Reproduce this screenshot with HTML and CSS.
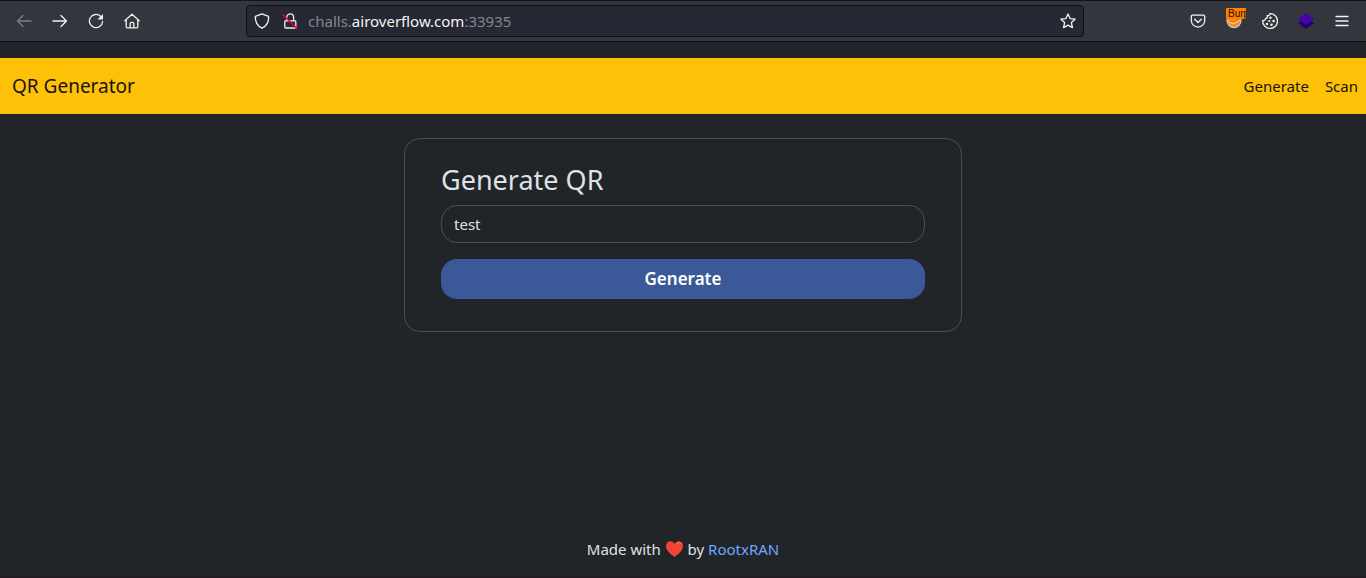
FILE: index.html
```html
<!DOCTYPE html>
<html lang="en">
<head>
<meta charset="utf-8">
<title>QR Generator</title>
<link rel="stylesheet" href="styles.css">
</head>
<body>
<header class="toolbar">
  <div class="tools tools-left">
    <button class="tool disabled" aria-label="Back" disabled><svg viewBox="0 0 16 16"><path d="M15 8H1.5M7 2.500 1.500 8 7 13.500"/></svg></button>
    <button class="tool" aria-label="Forward"><svg viewBox="0 0 16 16"><path d="M1 8h13.500M9 2.500 14.500 8 9 13.500"/></svg></button>
    <button class="tool" aria-label="Reload"><svg viewBox="0 0 16 16"><path d="M12.800 3.500A6.600 6.600 0 1 0 14.600 8.500"/><path class="solid" d="M15 1v5.500H9.500z"/></svg></button>
    <button class="tool" aria-label="Home"><svg viewBox="0 0 16 16"><path d="M.8 7.800 8 1.200l7.200 6.600M2.200 6.800v7q0 1 1 1h9.600q1 0 1-1v-7M6.200 14.500v-4q0-1.200 1.200-1.200h1.200q1.200 0 1.200 1.200v4"/></svg></button>
  </div>
  <div class="address">
    <svg class="icon" viewBox="0 0 16 16"><path d="M8 .9 14.600 3.300c.4 5.200-1.600 9.500-6.600 11.900C3 12.800 1 8.500 1.400 3.300z"/></svg>
    <svg class="icon" viewBox="0 0 16 16"><path d="M4.800 7V4.300a3.400 3.400 0 0 1 6.800 0V7M3.500 7.800h9.600q.7 0 .7.700v5.600q0 .9-.9.900H3.700q-.9 0-.9-.9V8.500q0-.7.7-.7z"/><path class="slash" d="M1.200 2 14.800 15.400"/></svg>
    <span class="url">challs.<b>airoverflow.com</b>:33935</span>
    <button class="star" aria-label="Bookmark this page"><svg viewBox="0 0 16 16"><path d="m8 1 2.100 4.600 5 .6-3.700 3.400 1 5L8 12.100l-4.400 2.500 1-5L.9 6.200l5-.6z"/></svg></button>
  </div>
  <div class="tools tools-right">
    <button class="tool" aria-label="Pocket"><svg viewBox="0 0 16 16"><path d="M2.500 2.200h11q1.200 0 1.200 1.200v4a6.700 6.700 0 0 1-13.400 0v-4q0-1.200 1.200-1.200zM4.700 6.300 8 9.500l3.300-3.200"/></svg></button>
    <button class="tool proxy" aria-label="Proxy: Burp"><svg viewBox="0 0 16 16"><circle cx="8" cy="7.500" r="7" fill="#ff8a14" stroke="#c9c5c0"/><path d="M3 8q3 5 10-.5" stroke="#f5d5b5"/><path d="m4 8 3 1 5-2" stroke="#e36a00"/></svg><span class="badge">Burp</span></button>
    <button class="tool" aria-label="Cookies"><svg viewBox="0 0 16 16"><path d="M8 .6A7.400 7.400 0 1 1 .7 7.300c1.600.7 2.800-.3 2.700-1.700C5.100 5.600 6 4 5 2.700 6 2.900 8 2.300 8 .6z"/><g class="solid"><circle cx="8.500" cy="4.700" r="1.200"/><circle cx="11.600" cy="8" r="1.300"/><circle cx="7.200" cy="8" r="1.100"/><circle cx="5" cy="11" r="1.200"/><circle cx="9.500" cy="11.700" r="1.300"/></g></svg></button>
    <button class="tool" aria-label="Layers"><svg viewBox="0 0 16 16"><path d="m0 10 8-5 8 5-8 6z" fill="#21006e" stroke="none"/><path d="m0 6 8-6 8 6-8 6z" fill="#4504a8" stroke="none"/></svg></button>
    <button class="tool" aria-label="Menu"><svg viewBox="0 0 16 16"><path d="M2 3.500h12M2 8h12M2 12.500h12"/></svg></button>
  </div>
</header>
<nav class="navbar">
  <a class="brand" href="#">QR Generator</a>
  <a class="link" href="#">Generate</a>
  <a class="link" href="#">Scan</a>
</nav>
<main class="content">
  <form class="card">
    <h1><label for="text">Generate QR</label></h1>
    <input id="text" type="text" value="test">
    <button class="submit" type="button">Generate</button>
  </form>
</main>
<footer class="footer">
  <p>Made with <svg class="heart" role="img" aria-label="love" viewBox="0 0 18 18"><path d="M9 17C5 14 .5 10.500.5 6 .5 1 6.500-.5 9 4c2.500-4.500 8.500-3 8.500 2 0 4.500-4.500 8-8.500 11z" fill="#f44336"/><path d="M11.500 3.500q2.500-2 4 0" fill="none" stroke="#ff7565" stroke-linecap="round"/></svg> by <a href="#">RootxRAN</a></p>
</footer>
</body>
</html>
```
FILE: styles.css
```css
* {
  box-sizing: border-box;
}

body {
  display: flex;
  flex-direction: column;
  min-height: 100vh;
  margin: 0;
  background: #212529;
  border-bottom: 2px solid #231c24;
  color: #dee2e6;
  font: 15px/24px "Noto Sans", sans-serif;
}

button {
  padding: 0;
  border: 0;
  background: none;
  color: inherit;
  font: inherit;
}

a {
  text-decoration: none;
}

.toolbar {
  display: grid;
  grid-template-columns: 246px 1fr 282px;
  align-items: center;
  height: 42px;
  background: #33363d;
  border-top: 1px solid #111418;
  border-bottom: 1px solid #0e1115;
  color: #f1f1f3;
}

.toolbar svg {
  display: block;
  width: 16px;
  height: 16px;
  fill: none;
  stroke: currentColor;
  stroke-width: 1.3;
  stroke-linecap: round;
  stroke-linejoin: round;
}

.toolbar .solid {
  fill: currentColor;
  stroke: none;
}

.toolbar .slash {
  stroke: #e4003b;
  stroke-width: 1.5;
}

.tools {
  display: flex;
  gap: 20px;
  padding: 0 16px;
}

.tools-right {
  justify-content: flex-end;
}

.tool {
  position: relative;
  width: 16px;
  height: 16px;
}

.disabled {
  color: #7b7d82;
}

.badge {
  position: absolute;
  top: -5px;
  left: 0;
  width: 20px;
  height: 11px;
  overflow: hidden;
  border-radius: 1px;
  background: #ff8000;
  color: #20150b;
  font: 10px/11px "Liberation Sans", sans-serif;
  text-align: left;
  text-indent: 2px;
}

.address {
  display: flex;
  align-items: center;
  gap: 12px;
  height: 32px;
  padding: 0 7px;
  border: 1px solid #0c0e14;
  border-radius: 4px;
  background: #262833;
}

.url {
  flex: 1;
  margin-left: -2px;
  color: #858690;
}

.url b {
  color: #f4f4f5;
  font-weight: 400;
}

.navbar {
  display: flex;
  align-items: center;
  gap: 16px;
  height: 56px;
  margin-top: 16px;
  padding: 0 8px 0 12px;
  background: #ffc107;
}

.navbar a {
  color: #15150f;
}

.navbar .brand {
  margin-right: auto;
  font-size: 19px;
}

.content {
  flex: 1;
  padding: 24px 16px;
}

.card {
  display: flex;
  flex-direction: column;
  max-width: 558px;
  margin: 0 auto;
  padding: 24px 36px 32px;
  border: 1px solid #495057;
  border-radius: 16px;
}

.card h1 {
  margin: 0 0 8px;
  font-size: 27px;
  font-weight: 400;
  line-height: 34px;
}

.card input {
  width: 100%;
  height: 38px;
  margin-bottom: 16px;
  padding: 0 12px;
  border: 1px solid #495057;
  border-radius: 16px;
  background: transparent;
  color: inherit;
  font: inherit;
}

.card .submit {
  height: 40px;
  border-radius: 16px;
  background: #3b5998;
  color: #fff;
  font-size: 17px;
  font-weight: 600;
}

.footer {
  padding-bottom: 15px;
  text-align: center;
}

.footer p {
  margin: 0;
}

.footer a {
  color: #6ea8fe;
}

.heart {
  width: 19px;
  height: 18px;
  vertical-align: -3px;
}
```
